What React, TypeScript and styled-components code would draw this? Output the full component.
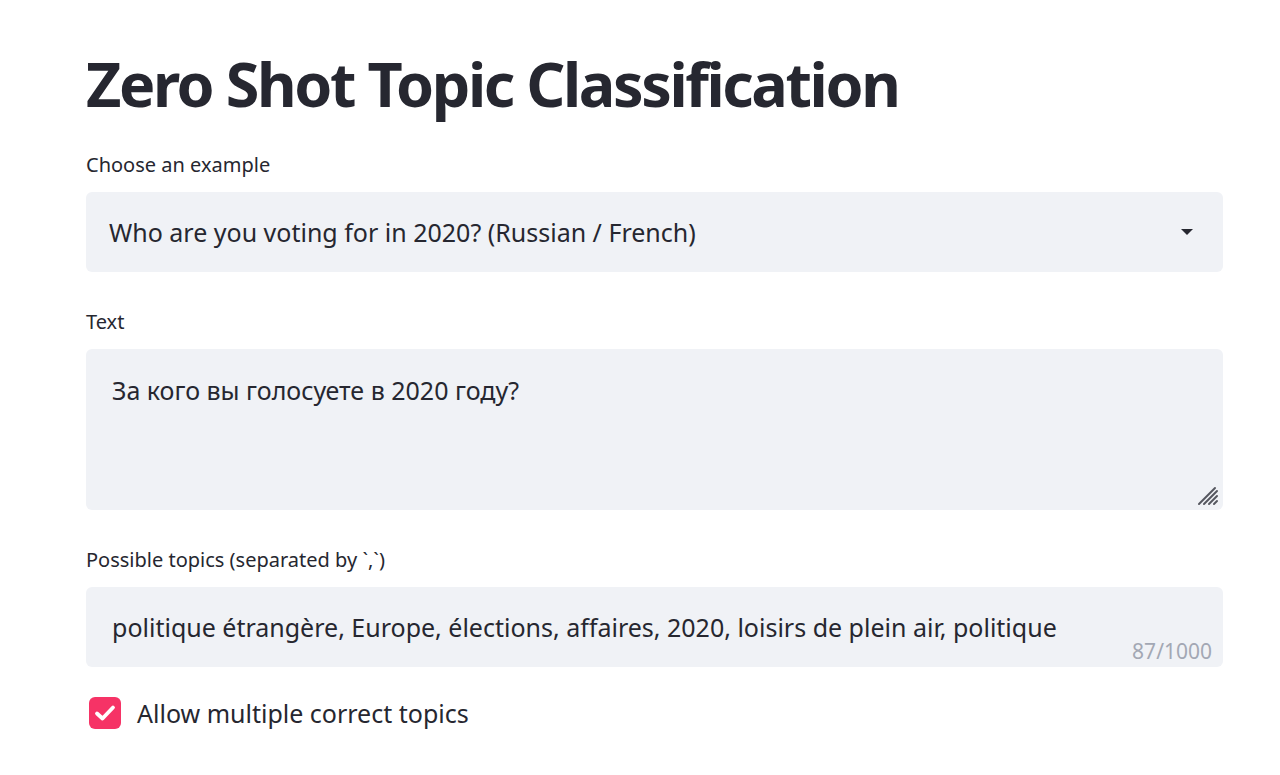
import React from "react";
import styled, { createGlobalStyle } from "styled-components";

const GlobalStyle = createGlobalStyle`
  html, body {
    margin: 0;
    padding: 0;
    background: #fff;
  }
  body {
    font-family: "Noto Sans", "Open Sans", sans-serif;
    color: #262730;
  }
`;

const Page = styled.main`
  width: 1137px;
  margin-left: 86px;
  padding-top: 44px;
  display: flex;
  flex-direction: column;
`;

const Title = styled.h1`
  margin: 0 0 27px;
  font-size: 61px;
  font-weight: 700;
  line-height: 80px;
  letter-spacing: -2.4px;
  color: #262730;
`;

const Field = styled.section<{ gap?: number }>`
  display: flex;
  flex-direction: column;
  margin-bottom: ${(p) => p.gap ?? 36}px;
`;

const Label = styled.label`
  font-size: 20px;
  line-height: 28px;
  margin-bottom: 13px;
  color: #262730;
`;

const Box = styled.div<{ h: number }>`
  position: relative;
  height: ${(p) => p.h}px;
  background: #f0f2f6;
  border-radius: 6px;
  display: flex;
  align-items: center;
  box-sizing: border-box;
`;

const SelectValue = styled.span`
  flex: 1;
  padding-left: 23px;
  font-size: 25px;
  color: #262730;
`;

const Caret = styled.div`
  width: 0;
  height: 0;
  margin-right: 30px;
  border-left: 6px solid transparent;
  border-right: 6px solid transparent;
  border-top: 6px solid #262730;
`;

const TextArea = styled.textarea`
  width: 100%;
  height: 100%;
  box-sizing: border-box;
  border: none;
  outline: none;
  resize: none;
  background: transparent;
  padding: 24px 26px;
  font-family: "Noto Sans", "Open Sans", sans-serif;
  font-size: 25px;
  line-height: 34px;
  color: #262730;
`;

const Grip = styled.svg`
  position: absolute;
  right: 4px;
  bottom: 4px;
`;

const Input = styled.input`
  width: 100%;
  height: 100%;
  box-sizing: border-box;
  border: none;
  outline: none;
  background: transparent;
  padding: 0 26px;
  font-family: "Noto Sans", "Open Sans", sans-serif;
  font-size: 25px;
  color: #262730;
`;

const Counter = styled.span`
  position: absolute;
  right: 11px;
  bottom: 2px;
  font-size: 21px;
  color: #a3a8b4;
`;

const CheckRow = styled.div`
  display: flex;
  align-items: center;
  gap: 16px;
  margin-top: -2px;
  padding-left: 3px;
`;

const CheckMark = styled.span`
  width: 32px;
  height: 32px;
  border-radius: 6px;
  background: #f63366;
  display: flex;
  align-items: center;
  justify-content: center;
`;

const CheckText = styled.span`
  font-size: 25px;
  color: #262730;
`;

export default function App() {
  return (
    <>
      <GlobalStyle />
      <Page>
        <Title>Zero Shot Topic Classification</Title>

        <Field>
          <Label>Choose an example</Label>
          <Box h={80}>
            <SelectValue>Who are you voting for in 2020? (Russian / French)</SelectValue>
            <Caret />
          </Box>
        </Field>

        <Field>
          <Label>Text</Label>
          <Box h={161}>
            <TextArea readOnly defaultValue="За кого вы голосуете в 2020 году?" />
            <Grip width="22" height="22" viewBox="0 0 22 22">
              <g stroke="#55575f" strokeWidth="2" strokeLinecap="round">
                <line x1="2" y1="20" x2="18" y2="4" />
                <line x1="7" y1="20" x2="20" y2="7" />
                <line x1="12" y1="20" x2="20" y2="12" />
                <line x1="17" y1="20" x2="20" y2="17" />
              </g>
            </Grip>
          </Box>
        </Field>

        <Field gap={31}>
          <Label>Possible topics (separated by `,`)</Label>
          <Box h={80}>
            <Input
              readOnly
              defaultValue="politique étrangère, Europe, élections, affaires, 2020, loisirs de plein air, politique"
            />
            <Counter>87/1000</Counter>
          </Box>
        </Field>

        <CheckRow>
          <CheckMark>
            <svg width="24" height="24" viewBox="0 0 24 24">
              <path d="M4 12.5 L9.5 17.5 L20 6.5" fill="none" stroke="#fff" strokeWidth="3.8" strokeLinecap="round" strokeLinejoin="round" />
            </svg>
          </CheckMark>
          <CheckText>Allow multiple correct topics</CheckText>
        </CheckRow>
      </Page>
    </>
  );
}
